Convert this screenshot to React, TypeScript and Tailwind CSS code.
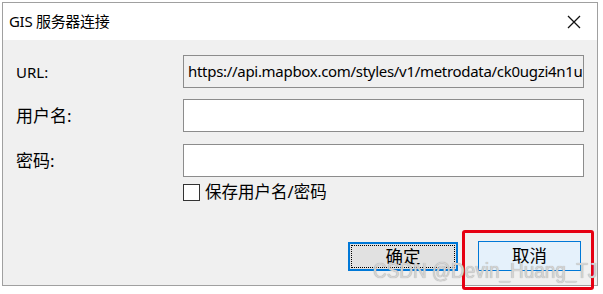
import React from "react";

const font = { fontFamily: '"Noto Sans", "Noto Sans CJK SC", sans-serif' };

export default function App() {
  return (
    <div className="relative w-[603px] h-[294px] bg-white overflow-hidden" style={font}>
      <div className="ml-[2px] mt-[2px] w-[596px] h-[284px] border border-[#a0a0a0] flex flex-col bg-[#f0f0f0]">
        {/* title bar */}
        <div className="h-[37px] bg-white flex items-center justify-between pl-[6px] pr-[14px] shrink-0">
          <span className="text-[15px] text-black leading-none tracking-[-0.3px]">GIS 服务器连接</span>
          <svg width="14" height="14" viewBox="0 0 14 14" className="mr-[2px]">
            <path d="M1 1 L13 13 M13 1 L1 13" stroke="#111" strokeWidth="1.3" fill="none" />
          </svg>
        </div>
        {/* body */}
        <div className="flex-1 flex flex-col pl-[13px] pr-[12px] pt-[15px]">
          <div className="flex items-center h-[33px]">
            <div className="w-[167px] text-[15px] text-black pt-[1px]">URL:</div>
            <div className="w-[401px] h-[33px] border border-[#8c8c8c] bg-[#f0f0f0] flex items-center pl-[4px] overflow-hidden whitespace-nowrap">
              <span className="text-[15px] text-black tracking-[-0.3px]">https://api.mapbox.com/styles/v1/metrodata/ck0ugzi4n1u</span>
            </div>
          </div>
          <div className="flex items-center h-[33px] mt-[11px]">
            <div className="w-[167px] text-[17px] text-black">用户名:</div>
            <div className="w-[401px] h-[33px] border border-[#8c8c8c] bg-white" />
          </div>
          <div className="flex items-center h-[33px] mt-[12px]">
            <div className="w-[167px] text-[17px] text-black">密码:</div>
            <div className="w-[401px] h-[33px] border border-[#8c8c8c] bg-white" />
          </div>
          <div className="flex items-center mt-[6px] ml-[167px] h-[18px]">
            <div className="w-[17px] h-[17px] border border-[#333] bg-white shrink-0" />
            <span className="ml-[5px] text-[16.5px] text-black leading-none">保存用户名/密码</span>
          </div>
          <div className="flex items-start mt-[40px] ml-[332px]">
            <div className="w-[110px] h-[29px] mt-[1px] border-2 border-[#0078d7] bg-[#e1e1e1] flex items-center justify-center outline outline-1 outline-dotted outline-black outline-offset-[-4px]">
              <span className="text-[17.5px] text-black leading-none">确定</span>
            </div>
            <div className="w-[103px] h-[30px] ml-[20px] border border-[#0078d7] bg-[#e5f1fb] flex items-center justify-center">
              <span className="text-[17.5px] text-black leading-none">取消</span>
            </div>
          </div>
        </div>
      </div>
      {/* red highlight annotation */}
      <div className="absolute left-[462px] top-[230px] w-[132px] h-[60px] border-[3px] border-[#e60012] rounded-[3px]" />
      {/* watermark */}
      <div
        className="absolute left-[373px] top-[260px] text-[22px] leading-none text-[#d4d4d4] whitespace-nowrap origin-left scale-x-[0.86]"
        style={{ fontFamily: '"Liberation Sans", Arial, sans-serif', textShadow: "0 0 1px #9a9a9a" }}
      >
        CSDN @Devin_Huang_TJ
      </div>
    </div>
  );
}
